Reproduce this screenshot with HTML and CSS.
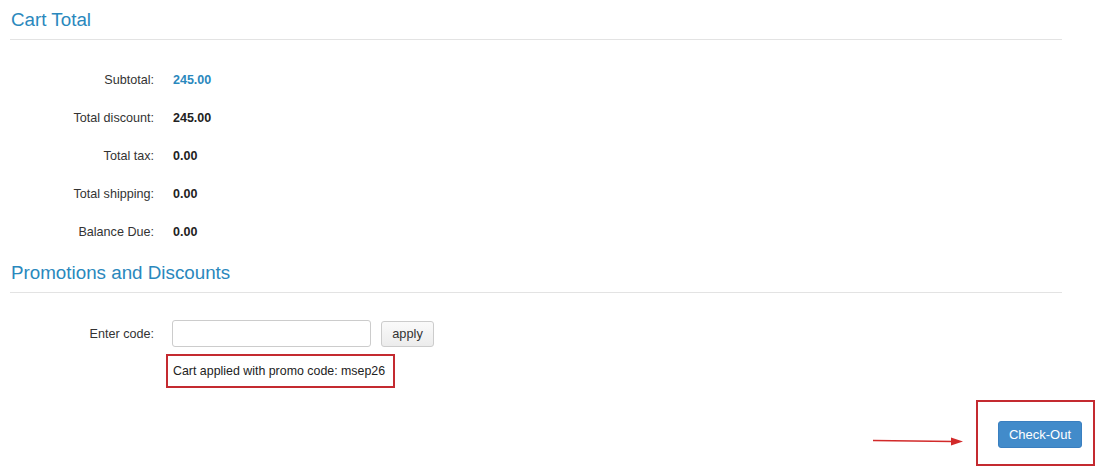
FILE: index.html
```html
<!DOCTYPE html>
<html>
<head>
<meta charset="utf-8">
<link rel="stylesheet" href="styles.css">
</head>
<body>
<div class="page">
  <section class="panel">
    <h2 class="panel-title">Cart Total</h2>
    <div class="totals">
      <div class="row"><span class="label">Subtotal:</span><span class="value accent">245.00</span></div>
      <div class="row"><span class="label">Total discount:</span><span class="value">245.00</span></div>
      <div class="row"><span class="label">Total tax:</span><span class="value">0.00</span></div>
      <div class="row"><span class="label">Total shipping:</span><span class="value">0.00</span></div>
      <div class="row"><span class="label">Balance Due:</span><span class="value">0.00</span></div>
    </div>
  </section>
  <section class="panel promo">
    <h2 class="panel-title">Promotions and Discounts</h2>
    <div class="promo-form">
      <div class="row form-row">
        <span class="label">Enter code:</span>
        <div class="controls">
          <input class="code-input" type="text">
          <button class="btn-apply">apply</button>
        </div>
      </div>
      <div class="notice-wrap">
        <div class="notice">Cart applied with promo code: msep26</div>
      </div>
    </div>
  </section>
  <div class="checkout-bar">
    <svg class="arrow" width="90" height="10" viewBox="0 0 90 10">
      <line x1="0" y1="4.5" x2="80" y2="5.5" stroke="#d22a2a" stroke-width="1.6"/>
      <polygon points="78,1.5 90,5.6 78,9.5" fill="#d22a2a"/>
    </svg>
    <div class="checkout-box">
      <button class="btn-checkout">Check-Out</button>
    </div>
  </div>
</div>
</body>
</html>
```
FILE: styles.css
```css
html, body {
  margin: 0;
  padding: 0;
  background: #fff;
}
body {
  font-family: "Liberation Sans", Arial, sans-serif;
  font-size: 12.6px;
  color: #333;
}
.page {
  width: 1101px;
  height: 467px;
  overflow: hidden;
}
.panel {
  margin-left: 10px;
  width: 1052px;
}
.panel-title {
  margin: 0;
  padding: 8px 0 7px 1px;
  line-height: 24px;
  font-size: 18.8px;
  font-weight: normal;
  color: #2a88bd;
  border-bottom: 1px solid #e3e3e3;
}
.totals {
  padding-top: 21px;
}
.row {
  display: grid;
  grid-template-columns: 144px auto;
  column-gap: 19px;
  align-items: center;
  height: 38px;
}
.label {
  text-align: right;
  color: #333;
}
.value {
  font-weight: bold;
  font-size: 12.5px;
  color: #222;
}
.value.accent {
  color: #2a88bd;
}
.promo {
  margin-top: 2px;
}
.promo-form {
  padding-top: 27px;
}
.form-row {
  height: 26px;
  column-gap: 18px;
}
.controls {
  display: flex;
  align-items: center;
  gap: 10px;
}
.code-input {
  box-sizing: border-box;
  width: 199px;
  height: 27px;
  border: 1px solid #ccc;
  border-radius: 3px;
  margin: 0;
  padding: 0 6px;
  font-family: inherit;
}
.btn-apply {
  box-sizing: border-box;
  height: 26px;
  width: 53px;
  margin: 0;
  border: 1px solid #ccc;
  border-radius: 3px;
  background: linear-gradient(#fafafa, #ececec);
  font-family: inherit;
  font-size: 12.8px;
  color: #333;
  padding: 0;
}
.notice-wrap {
  padding: 8px 0 0 156px;
}
.notice {
  display: inline-block;
  box-sizing: border-box;
  height: 34px;
  width: 229px;
  border: 2px solid #c42a30;
  padding: 0 5px;
  line-height: 30px;
  font-size: 12.4px;
  color: #222;
  white-space: nowrap;
}
.checkout-bar {
  display: flex;
  justify-content: flex-end;
  align-items: flex-start;
  margin-top: 12px;
  padding-right: 6px;
}
.arrow {
  margin-top: 36px;
  margin-right: 13px;
}
.checkout-box {
  box-sizing: border-box;
  width: 119px;
  height: 66px;
  border: 2px solid #c42a30;
  padding: 19px 0 0 20px;
}
.btn-checkout {
  box-sizing: border-box;
  width: 84px;
  height: 27px;
  margin: 0;
  padding: 0;
  border: 1px solid #3a7fc0;
  border-radius: 3px;
  background: #428bca;
  color: #fff;
  font-family: inherit;
  font-size: 13px;
}
```
